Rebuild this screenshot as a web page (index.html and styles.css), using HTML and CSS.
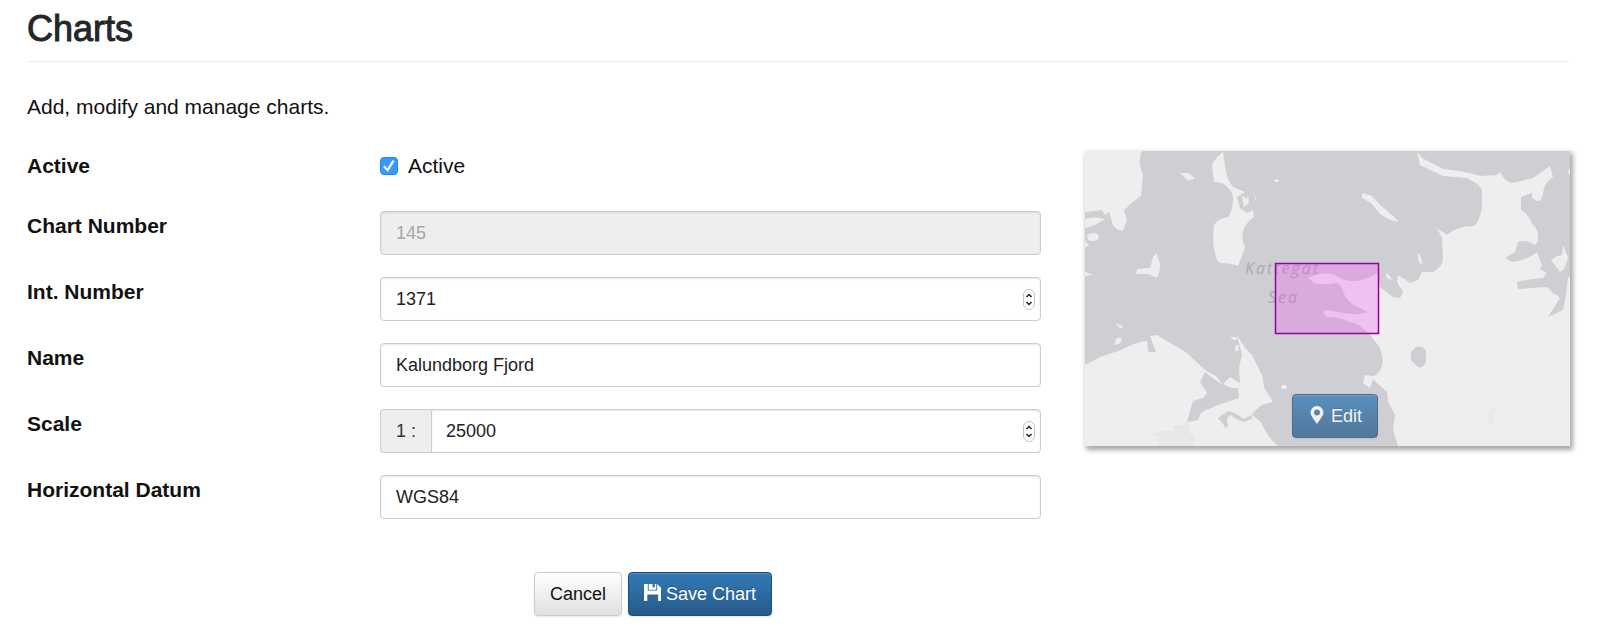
FILE: index.html
```html
<!DOCTYPE html>
<html lang="en">
<head>
<meta charset="utf-8">
<title>Charts</title>
<link rel="stylesheet" href="styles.css">
</head>
<body>
<main class="page">
  <h1 class="title">Charts</h1>
  <p class="intro">Add, modify and manage charts.</p>
  <div class="editor">
    <form class="form">
      <div class="row row-check">
        <span class="label">Active</span>
        <label class="check"><input class="check-box" type="checkbox" checked>Active</label>
      </div>
      <div class="row">
        <label class="label" for="number">Chart Number</label>
        <input class="input" id="number" type="text" value="145" disabled>
      </div>
      <div class="row">
        <label class="label" for="int-number">Int. Number</label>
        <div class="field">
          <input class="input" id="int-number" type="number" value="1371">
          <svg class="stepper" viewBox="0 0 12 21" aria-hidden="true"><rect x=".5" y=".5" width="11" height="20" rx="5.5"/><path d="M3.5 8 6 5.5 8.500 8M3.500 13 6 15.500 8.500 13"/></svg>
        </div>
      </div>
      <div class="row">
        <label class="label" for="name">Name</label>
        <input class="input" id="name" type="text" value="Kalundborg Fjord">
      </div>
      <div class="row">
        <label class="label" for="scale">Scale</label>
        <div class="field">
          <span class="addon">1 :</span>
          <input class="input input-joined" id="scale" type="number" value="25000">
          <svg class="stepper" viewBox="0 0 12 21" aria-hidden="true"><rect x=".5" y=".5" width="11" height="20" rx="5.5"/><path d="M3.5 8 6 5.5 8.500 8M3.500 13 6 15.500 8.500 13"/></svg>
        </div>
      </div>
      <div class="row">
        <label class="label" for="datum">Horizontal Datum</label>
        <input class="input" id="datum" type="text" value="WGS84">
      </div>
      <div class="actions">
        <button class="btn btn-default" type="button">Cancel</button>
        <button class="btn btn-primary" type="submit"><svg class="icon-save" viewBox="0 0 18 18" aria-hidden="true"><path d="M0 0h4v7h10V0l4 4v14h-3v-7H3.500v7H0ZM5 0h4v3.500h2.500V0H13v6H5Z"/></svg>Save Chart</button>
      </div>
    </form>
    <div class="map">
      <svg class="map-art" viewBox="0 0 485 295" preserveAspectRatio="xMidYMid slice" role="img" aria-label="Chart extent">
        <rect class="water" width="485" height="295"/>
        <g class="land">
          <path d="M0 0H57Q54 7 55 14L58 24 56 45 48 51 39 59 42 69 38 80Q31 79 28 74L24 61 20 64 17 59 0 61Z"/>
          <path d="M0 68Q8 65 20 68L10 74 0 77ZM0 90 4 94 0 97ZM0 121 8 124 0 125Z"/>
          <ellipse cx="8" cy="86" rx="6" ry="4"/>
          <path d="M52 118Q60 117 65 117L68 106 71 102 75 112Q75 122 72 127L63 123 51 123ZM95 22 103 22 110 27 103 30Z"/>
          <path d="M138 1Q130 7 127 14L129 31Q138 31 142 36 149 42 148 50 147 62 143 66 132 68 129 74 127 92 130 101 131 110 135 112 147 112 153 115L160 97Q156 88 158 81 160 72 169 66L168 59 162 62 155 57 152 46 160 41 148 36Q142 28 141 21Z"/>
          <path d="M188 29l5-1 1 3h-3ZM168 39l4 12-2-3ZM157 45l5 3 1-5 1 9-5 4Z"/>
          <path d="M332 0 337 7 358 18Q380 20 395 25L412 24 415 21Q419 30 427 32L448 27 465 15 468 26Q458 33 458 43 457 51 452 50L447 47V42L436 46 436 59Q444 64 446 71L452 79Q455 90 450 94 440 88 433 91L430 101 420 107 427 111Q440 110 452 101L457 114 455 118 462 122 458 127Q444 128 432 131L433 138 462 136Q468 143 472 144L475 147 463 166 478 159 481 144 483 127 485 125V295H313L308 279 310 264 303 251 302 241 292 232 288 228 285 237 278 232 280 224 288 225Q295 224 298 211 297 200 293 194L285 184Q276 173 265 171 255 166 242 166L238 161 242 159 258 162 268 163 275 163 282 161 275 157Q266 154 260 145 257 136 253 132 240 134 230 133L223 127Q238 120 250 124 268 137 292 122L295 136 308 146 315 147 318 141 312 131 313 124 325 132 333 129 337 121 348 121Q358 116 358 107L357 87 352 77 362 84Q371 75 389 75 394 71 397 57V41Q397 34 382 27L358 25Q347 20 335 14Z"/>
          <path d="M478 94 483 107 479 118 475 121 466 109 472 105 477 104ZM485 17 483 20 485 25ZM332 102 335 104 338 114 334 111ZM301 122l4 3 2 5-6-4Z"/>
          <path d="M277 42 287 45 295 54Q303 60 308 65L314 71 305 69 295 63 286 52 277 47Z"/>
          <path d="M0 214 15 206 36 199 42 196Q52 191 62 190L63 201 71 201 65 185 72 184 102 202 120 219 131 225 138 234 133 231 120 221 115 231 122 242 117 249 119 255 122 259Q134 253 145 250L154 247 153 237Q145 238 138 233L145 226 155 232 154 216 157 204 152 184Q160 198 167 204L177 224 179 236 188 251 177 254Q169 260 167 264L176 271Q182 286 193 295H0Z"/>
          <path d="M30 172 38 175 36 178ZM31 188l4-2 2 4-3 3-5 1ZM145 186h6l1 3h-3ZM151 194h3l-1 6h-3Z"/>
          <ellipse cx="199" cy="236" rx="3" ry="2"/>
        </g>
        <g class="water">
          <path d="M143 260Q152 262 158 268L167 264V268L159 271Q150 268 146 264 140 266 143 274L141 277 133 267Z"/>
          <path d="M117 247 108 250 105 260 102 271 113 269 116 262 122 258ZM331 196Q338 194 341 200L341 210Q338 218 333 216L326 209V201Z"/>
        </g>
        <path class="shade" d="M72 280h16v-6h16v8l6 4-2 9H74v-9l-8-2Z"/>
        <path class="shade" d="M404 259l7-2-3 15-5 1Z"/>
        <text class="sea" x="160" y="123">Kattegat</text>
        <text class="sea" x="183" y="152">Sea</text>
        <rect class="extent" x="190.500" y="112.500" width="103" height="70"/>
      </svg>
      <button class="btn btn-primary btn-edit" type="button"><svg class="icon-pin" viewBox="0 0 14 18" aria-hidden="true"><path fill-rule="evenodd" d="M7 0a6.500 6.500 0 0 1 6.500 6.500C13.500 10 9 14.500 7 18 5 14.500.5 10 .5 6.500A6.500 6.500 0 0 1 7 0ZM7 3.500a3 3 0 1 0 0 6 3 3 0 0 0 0-6Z"/></svg>Edit</button>
    </div>
  </div>
</main>
</body>
</html>
```
FILE: styles.css
```css
* { box-sizing: border-box; }
body {
  margin: 0;
  background: #fff;
  color: #111;
  font: 21px/30px "Liberation Sans", Arial, sans-serif;
}
.page { padding: 9px 30px 26px 27px; }
.title {
  margin: 0;
  padding-bottom: 12px;
  border-bottom: 1px solid #eee;
  color: #262626;
  font-size: 36px;
  font-weight: 500;
  line-height: 40px;
  -webkit-text-stroke: 1px #262626;
}
.intro { margin: 30px 0 29px; }
.editor {
  display: grid;
  grid-template-columns: minmax(0, 1014fr) minmax(0, 485fr);
  gap: 44px;
  align-items: start;
}
.form { display: flex; flex-direction: column; gap: 22px; }
.row { display: grid; grid-template-columns: 353fr 661fr; align-items: start; }
.row-check { margin-bottom: 8px; }
.label { font-weight: bold; }
.check { display: flex; align-items: center; gap: 10px; }
.check-box {
  appearance: none;
  width: 18px;
  height: 18px;
  margin: 0;
  border: 1px solid #1c86f2;
  border-radius: 4px;
  background: #3b99fc;
  display: grid;
  place-items: center;
}
.check-box:checked::before {
  content: "";
  width: 12px;
  height: 12px;
  background: #fff;
  clip-path: polygon(0 58%, 14% 46%, 36% 70%, 80% 0, 96% 10%, 40% 98%);
}
.field { position: relative; display: flex; }
.input {
  width: 100%;
  min-width: 0;
  height: 44px;
  padding: 0 15px;
  border: 1px solid #ccc;
  border-radius: 4px;
  background: #fff;
  box-shadow: inset 0 1px 2px rgba(0, 0, 0, .1);
  color: #222;
  font: inherit;
  font-size: 18px;
  appearance: textfield;
}
.input::-webkit-inner-spin-button { appearance: none; margin: 0; }
.input:disabled { background: #eee; color: #a6a6a6; }
.input-joined { padding-left: 14px; border-radius: 0 4px 4px 0; }
.addon {
  flex: none;
  padding: 0 15px;
  border: 1px solid #ccc;
  border-right: 0;
  border-radius: 4px 0 0 4px;
  background: #eee;
  color: #333;
  font-size: 18px;
  line-height: 42px;
}
.stepper {
  position: absolute;
  top: 12px;
  right: 6px;
  width: 12px;
  height: 21px;
  fill: #fff;
  stroke: #c4c4c4;
}
.stepper path { fill: none; stroke: #222; stroke-width: 1.500; }
.actions { display: flex; gap: 6px; margin: 31px 0 0 50%; }
.btn {
  height: 44px;
  padding: 0 15px;
  border: 1px solid #ccc;
  border-radius: 4px;
  font: inherit;
  font-size: 18px;
  white-space: nowrap;
  display: flex;
  align-items: center;
}
.btn-default {
  background: linear-gradient(#fff, #e0e0e0);
  color: #111;
  box-shadow: 0 1px 2px rgba(0, 0, 0, .1);
}
.btn-primary {
  gap: 5px;
  border-color: #1d4c79;
  background: linear-gradient(#337ab7, #265a88);
  color: #fff;
  box-shadow: inset 0 1px 0 rgba(255, 255, 255, .15), 0 1px 2px rgba(0, 0, 0, .1);
  text-shadow: 0 -1px 0 rgba(0, 0, 0, .2);
}
.icon-save { width: 17px; height: 17px; margin-bottom: 4px; fill: #fff; }
.icon-pin { width: 14px; height: 18px; margin: 0 2px 2px 2px; fill: #fff; }
.map { position: relative; box-shadow: 2px 3px 5px 1px rgba(0, 0, 0, .35); }
.map-art { display: block; width: 100%; }
.water { fill: #cfced3; }
.land { fill: #eee; }
.shade { fill: #e8e8e8; }
.sea { fill: #aaa9ad; font: italic 16px "Open Sans", sans-serif; letter-spacing: 2px; }
.extent { fill: rgba(245, 80, 245, .29); stroke: #909; stroke-width: 1.500; }
.btn-edit {
  position: absolute;
  right: 192px;
  bottom: 8px;
  opacity: .74;
}
```
